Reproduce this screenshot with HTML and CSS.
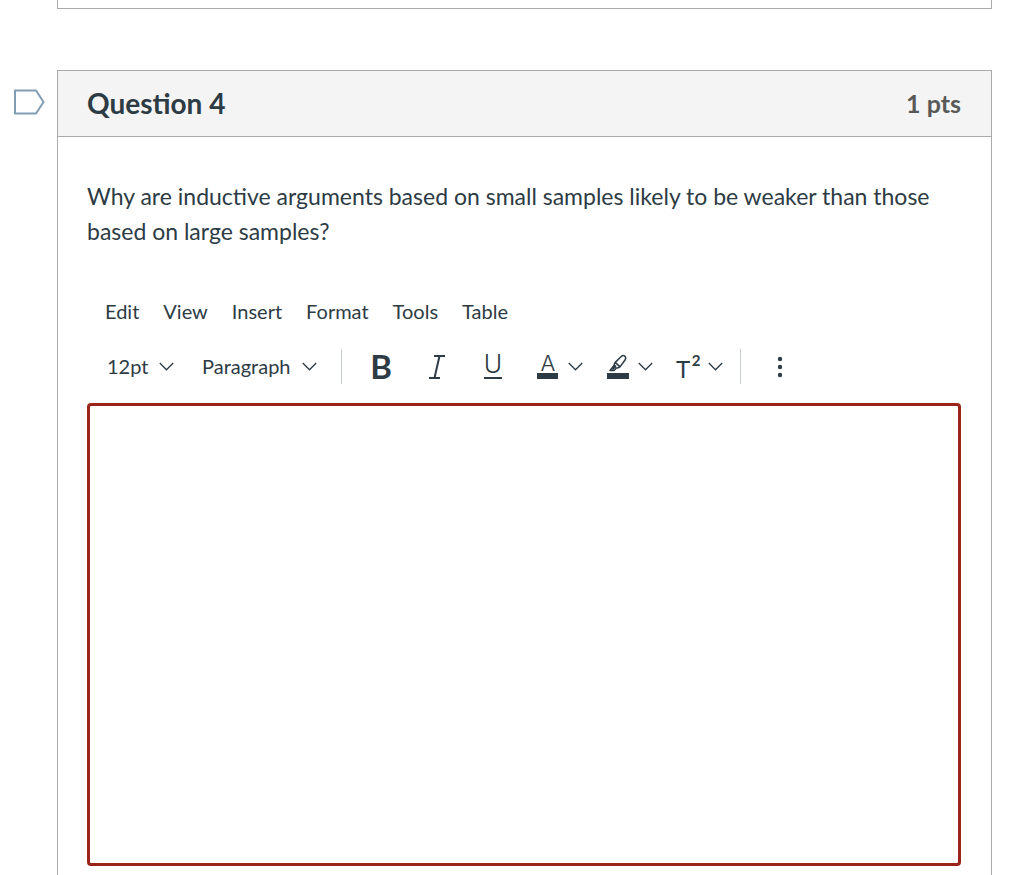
FILE: index.html
```html
<!DOCTYPE html>
<html lang="en">
  <head>
    <meta charset="UTF-8" />
    <meta name="viewport" content="width=device-width, initial-scale=1.0" />
    <link rel="stylesheet" href="styles.css" />
    <title>Quiz</title>
  </head>
  <body>
    <!-- Shared icons -->
    <svg class="icon-defs" width="0" height="0" aria-hidden="true">
      <symbol id="chevron" viewBox="0 0 15 9">
        <path d="M.8 1 7.5 7.8 14.2 1" />
      </symbol>
    </svg>
    <main class="quiz">
      <section class="previous-question"></section>
      <div class="question-row">
        <button class="flag" aria-label="Mark question">
          <svg width="32" height="26" viewBox="0 0 32 26">
            <path d="M2 1.5H23L30.5 13 23 24.500H2Z" />
          </svg>
        </button>
        <section class="question">
          <header class="question-header">
            <h2>Question 4</h2>
            <span class="points">1 pts</span>
          </header>
          <div class="question-body">
            <p class="question-text">
              Why are inductive arguments based on small samples likely to be
              weaker than those based on large samples?
            </p>
            <div class="menubar">
              <button>Edit</button>
              <button>View</button>
              <button>Insert</button>
              <button>Format</button>
              <button>Tools</button>
              <button>Table</button>
            </div>
            <div class="toolbar">
              <div class="picker">
                <select class="size" aria-label="Font size">
                  <option>12pt</option>
                </select>
                <svg class="chevron"><use href="#chevron" /></svg>
              </div>
              <div class="picker">
                <select class="block" aria-label="Block format">
                  <option>Paragraph</option>
                </select>
                <svg class="chevron"><use href="#chevron" /></svg>
              </div>
              <span class="separator"></span>
              <div class="tools">
                <button class="tool" aria-label="Bold">
                  <svg class="icon" viewBox="0 0 24 26">
                    <text class="bold" x="12" y="25">B</text>
                  </svg>
                </button>
                <button class="tool" aria-label="Italic">
                  <svg class="icon" viewBox="0 0 24 26">
                    <g class="slant">
                      <line x1="9" y1="2" x2="20" y2="2" />
                      <line x1="14.500" y1="2" x2="9.500" y2="24" />
                      <line x1="4" y1="24" x2="15" y2="24" />
                    </g>
                  </svg>
                </button>
                <button class="tool" aria-label="Underline">
                  <svg class="icon" viewBox="0 0 24 26">
                    <text class="underline" x="12" y="19">U</text>
                    <rect x="3" y="23" width="18" height="2" />
                  </svg>
                </button>
              </div>
              <div class="tools">
                <button class="split" aria-label="Text color">
                  <svg class="icon" viewBox="0 0 24 26">
                    <text class="color" x="12" y="17">A</text>
                    <rect x="1" y="19" width="21" height="6" />
                  </svg>
                  <svg class="chevron"><use href="#chevron" /></svg>
                </button>
                <button class="split" aria-label="Background color">
                  <svg class="icon" viewBox="0 0 24 26">
                    <path
                      class="line"
                      d="M9.200 8.400 15.500 2.200Q17.300.7 19 2.300 20.400 4 19.200 5.700L14 12.900Q11.500 14.800 9 13.700 7.300 11 9.200 8.400ZM9.200 8.400 14 12.900M8 11.500 4 16.500H8L10.200 14.300M6.500 15.500 10 11.400"
                    />
                    <rect x="1" y="19" width="22" height="6" />
                  </svg>
                  <svg class="chevron"><use href="#chevron" /></svg>
                </button>
                <button class="split" aria-label="Superscript">
                  <svg class="icon" viewBox="0 0 24 26">
                    <text class="base" x="7" y="24">T</text>
                    <text class="power" x="20" y="12">2</text>
                  </svg>
                  <svg class="chevron"><use href="#chevron" /></svg>
                </button>
              </div>
              <span class="separator"></span>
              <button class="tool" aria-label="More">
                <svg class="icon" viewBox="0 0 24 26">
                  <circle cx="12" cy="5" r="2.200" />
                  <circle cx="12" cy="13" r="2.200" />
                  <circle cx="12" cy="21" r="2.200" />
                </svg>
              </button>
            </div>
            <textarea class="editor" aria-label="Answer"></textarea>
          </div>
        </section>
      </div>
    </main>
  </body>
</html>
```

FILE: styles.css
```css
* {
  box-sizing: border-box;
}
body {
  margin: 0;
  height: 100vh;
  overflow: hidden;
  background: #fff;
  color: #2d3b45;
  font-family: Lato, sans-serif;
}
button,
select {
  margin: 0;
  padding: 0;
  border: 0;
  background: none;
  color: inherit;
  font: inherit;
  cursor: pointer;
}
.icon-defs {
  position: absolute;
}
.quiz {
  padding-right: 32px;
}
.previous-question {
  height: 9px;
  margin: 0 0 61px 57px;
  border: 1px solid #aaa;
  border-top: 0;
}
.question-row {
  display: flex;
  align-items: flex-start;
}
.flag {
  display: flex;
  flex: none;
  width: 57px;
  padding: 19px 0 0 13px;
}
.flag path {
  fill: none;
  stroke: #829db3;
  stroke-width: 2;
}
.question {
  flex: 1;
  border: 1px solid #aaa;
}
.question-header {
  display: flex;
  align-items: center;
  justify-content: space-between;
  height: 66px;
  padding: 0 30px 2px 29px;
  background: #f4f4f4;
  border-bottom: 1px solid #aaa;
}
.question-header h2 {
  margin: 0;
  font-size: 28px;
  font-weight: 700;
}
.points {
  color: #595959;
  font-size: 25px;
  font-weight: 700;
}
.question-body {
  padding: 42px 30px 40px 29px;
}
.question-text {
  margin: 0 0 50px;
  font-size: 23px;
  line-height: 35px;
}
.menubar {
  display: flex;
  gap: 24px;
  padding-left: 18px;
  font-size: 20px;
  line-height: 24px;
}
.toolbar {
  display: flex;
  align-items: center;
  height: 35px;
  margin: 26px 0 19px;
  padding-left: 20px;
  font-size: 20px;
}
.picker {
  display: flex;
  align-items: center;
  position: relative;
}
.picker + .picker {
  margin: 0 24px 0 28px;
}
.picker select {
  height: 26px;
  padding-bottom: 2px;
  appearance: none;
}
.picker .chevron {
  position: absolute;
  right: 0;
  pointer-events: none;
}
.size {
  width: 67px;
}
.block {
  width: 115px;
}
.chevron {
  width: 15px;
  height: 9px;
  fill: none;
  stroke: #2d3b45;
  stroke-width: 1.3;
}
.separator {
  width: 1px;
  height: 35px;
  background: #c7cdd1;
}
.tools {
  display: flex;
}
.separator + .tools,
.separator + .tool {
  margin-left: 11px;
}
.tools + .tools {
  margin-left: 4px;
}
.tools + .separator {
  margin-left: 5px;
}
.tool {
  display: flex;
  justify-content: center;
  width: 56px;
}
.split {
  display: flex;
  align-items: center;
  gap: 8px;
  width: 70px;
  padding-left: 11px;
}
.icon {
  width: 24px;
  height: 26px;
  fill: #2d3b45;
  overflow: visible;
}
.icon text {
  text-anchor: middle;
}
.icon .line,
.slant {
  fill: none;
  stroke: #2d3b45;
  stroke-width: 1.5;
  stroke-linejoin: round;
}
.slant {
  stroke-width: 2;
}
.bold {
  font-size: 33px;
  font-weight: 700;
}
.underline {
  font-family: Inter, sans-serif;
  font-size: 25px;
  font-weight: 300;
}
.color {
  font-family: Inter, sans-serif;
  font-size: 22px;
  font-weight: 300;
}
.base {
  font-size: 24px;
}
.power {
  font-size: 15px;
  font-weight: 700;
}
.editor {
  display: block;
  width: 100%;
  height: 463px;
  padding: 16px;
  border: 3px solid #9a2419;
  border-radius: 4px;
  outline: 0;
  resize: none;
  font: inherit;
}
```
